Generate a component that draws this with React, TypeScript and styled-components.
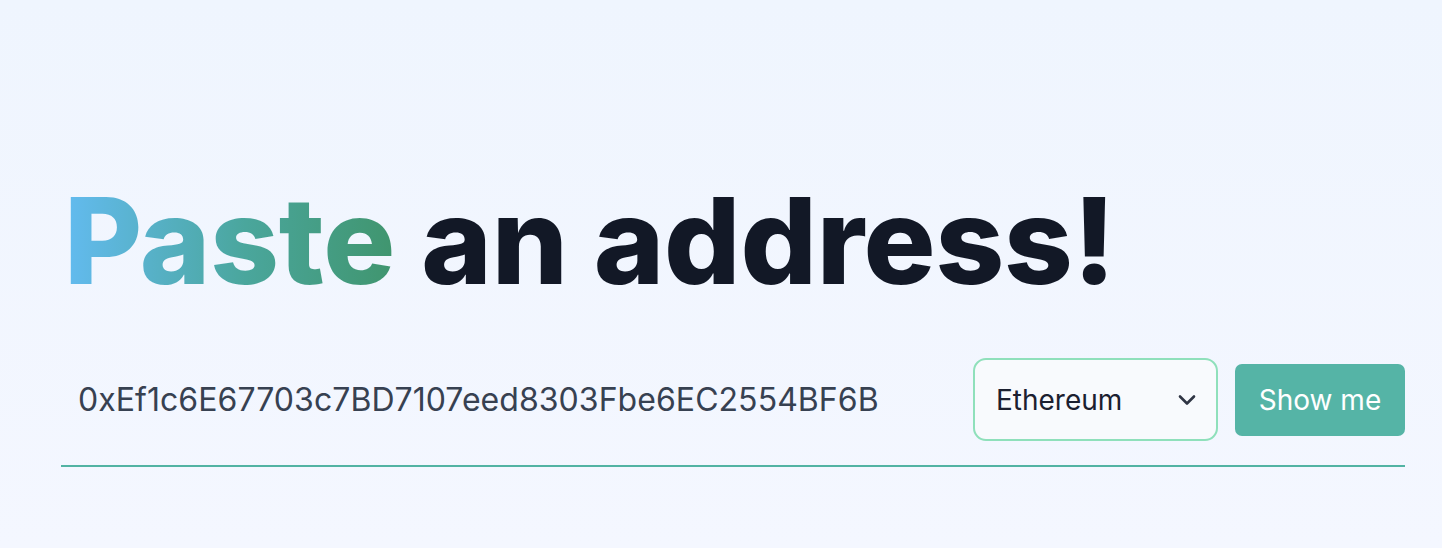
import React from "react";
import styled, { createGlobalStyle } from "styled-components";

const GlobalStyle = createGlobalStyle`
  html, body {
    margin: 0;
    padding: 0;
  }
  body {
    font-family: Inter, "Noto Sans", sans-serif;
    background: linear-gradient(180deg, #eff5fe 0%, #f4f7ff 100%);
    min-height: 548px;
  }
`;

const Page = styled.main`
  box-sizing: border-box;
  width: 1442px;
  height: 548px;
  padding: 181px 37px 0 61px;
  display: flex;
  flex-direction: column;
`;

const Heading = styled.h1`
  margin: 0 0 0 3px;
  font-family: Inter, sans-serif;
  font-size: 120px;
  font-weight: 800;
  line-height: 1;
  letter-spacing: -0.2px;
  color: #121826;
`;

const Gradient = styled.span`
  background: linear-gradient(90deg, #63bbf0 0%, #4aa69c 55%, #40956e 100%);
  -webkit-background-clip: text;
  background-clip: text;
  color: transparent;
`;

const Form = styled.form`
  margin-top: 57px;
  display: flex;
  align-items: center;
  gap: 17px;
  padding-bottom: 24px;
  border-bottom: 2px solid #52b3a3;
`;

const AddressInput = styled.input`
  flex: 1;
  min-width: 0;
  border: none;
  outline: none;
  background: transparent;
  padding: 0 0 0 17px;
  font-family: Inter, sans-serif;
  font-size: 32px;
  letter-spacing: 0.05px;
  color: #374151;
`;

const SelectWrap = styled.div`
  position: relative;
  width: 245px;
  height: 83px;
`;

const Select = styled.select`
  appearance: none;
  -webkit-appearance: none;
  box-sizing: border-box;
  width: 100%;
  height: 100%;
  border: 2px solid #8fe0bb;
  border-radius: 13px;
  background: #f8fafd;
  padding: 0 0 0 21px;
  font-family: Inter, sans-serif;
  font-size: 28px;
  color: #1b2030;
  outline: none;
`;

const Chevron = styled.svg`
  position: absolute;
  right: 19px;
  top: 50%;
  transform: translateY(-50%);
  pointer-events: none;
`;

const Button = styled.button`
  box-sizing: border-box;
  width: 170px;
  height: 72px;
  border: none;
  border-radius: 7px;
  background: #55b4a6;
  color: #ffffff;
  font-family: Inter, sans-serif;
  font-size: 28px;
  font-weight: 400;
  cursor: pointer;
`;

export default function App() {
  return (
    <>
      <GlobalStyle />
      <Page>
        <Heading>
          <Gradient>Paste</Gradient> an address!
        </Heading>
        <Form onSubmit={(e) => e.preventDefault()}>
          <AddressInput defaultValue="0xEf1c6E67703c7BD7107eed8303Fbe6EC2554BF6B" />
          <SelectWrap>
            <Select defaultValue="ethereum">
              <option value="ethereum">Ethereum</option>
              <option value="polygon">Polygon</option>
            </Select>
            <Chevron width="24" height="24" viewBox="0 0 24 24" fill="none">
              <path d="M5 8.5l7 7 7-7" stroke="#2f3544" strokeWidth="2.6" strokeLinecap="round" strokeLinejoin="round" />
            </Chevron>
          </SelectWrap>
          <Button type="submit">Show me</Button>
        </Form>
      </Page>
    </>
  );
}
